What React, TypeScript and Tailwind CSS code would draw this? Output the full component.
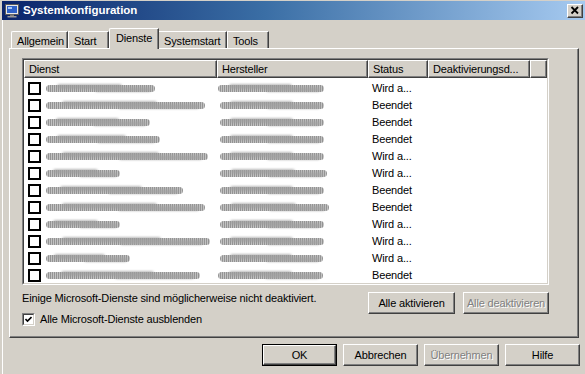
import React from "react";

type Row = { d: number; h: number; hx: number; s: string };

const rows: Row[] = [
  { d: 109, h: 106, hx: 1, s: "Wird a..." },
  { d: 159, h: 104, hx: 3, s: "Beendet" },
  { d: 104, h: 104, hx: 3, s: "Beendet" },
  { d: 114, h: 104, hx: 3, s: "Beendet" },
  { d: 162, h: 104, hx: 3, s: "Wird a..." },
  { d: 74, h: 107, hx: 3, s: "Wird a..." },
  { d: 137, h: 104, hx: 3, s: "Beendet" },
  { d: 159, h: 109, hx: 3, s: "Beendet" },
  { d: 74, h: 104, hx: 3, s: "Wird a..." },
  { d: 164, h: 104, hx: 3, s: "Wird a..." },
  { d: 84, h: 103, hx: 3, s: "Wird a..." },
  { d: 154, h: 105, hx: 1, s: "Beendet" },
];

function Smudge({ w, ml }: { w: number; ml: number }) {
  return (
    <div className="relative h-[11px]" style={{ width: w, marginLeft: ml }}>
      <div className="absolute inset-x-0 top-[2px] h-[7px] rounded-full bg-[repeating-linear-gradient(90deg,#888888_0px,#888888_1px,#bcbcbc_1px,#bcbcbc_2px)] opacity-90 blur-[0.7px]" />
      <div className="absolute left-[10%] right-[30%] top-[1px] h-[5px] rounded-full bg-[#9e9e9e] opacity-70 blur-[1.2px]" />
      <div className="absolute left-[45%] right-[4%] top-[4px] h-[5px] rounded-full bg-[#a2a2a2] opacity-70 blur-[1.2px]" />
    </div>
  );
}

function Bevel({
  w,
  children,
  disabled,
}: {
  w: number;
  children: React.ReactNode;
  disabled?: boolean;
}) {
  return (
    <div
      className="h-[22px] flex items-center justify-center bg-[#d4d0c8] border border-t-white border-l-white border-r-[#404040] border-b-[#404040] shadow-[inset_-1px_-1px_0_#808080]"
      style={{ width: w }}
    >
      <span
        className={
          disabled
            ? "text-[#808080] [text-shadow:1px_1px_0_#ffffff]"
            : "text-black"
        }
      >
        {children}
      </span>
    </div>
  );
}

function DefaultBtn({ children }: { children: React.ReactNode }) {
  return (
    <div className="w-[75px] h-[22px] border border-black">
      <div className="w-full h-full flex items-center justify-center border border-t-white border-l-white border-r-[#404040] border-b-[#404040] shadow-[inset_-1px_-1px_0_#808080]">
        <span>{children}</span>
      </div>
    </div>
  );
}

function HeaderCell({ w, children }: { w?: number; children?: React.ReactNode }) {
  return (
    <div
      className={
        "h-[18px] flex items-center pl-[4px] bg-[#d4d0c8] border border-t-white border-l-white border-r-[#404040] border-b-[#404040] shadow-[inset_-1px_-1px_0_#808080] whitespace-nowrap overflow-hidden" +
        (w ? "" : " flex-1")
      }
      style={w ? { width: w } : undefined}
    >
      {children}
    </div>
  );
}

export default function App() {
  return (
    <div className="w-[585px] h-[374px] overflow-hidden bg-[#d4d0c8] font-['Liberation_Sans',Arial,sans-serif] text-[11px] leading-[13px] tracking-[-0.15px] text-black select-none">
      <div className="pt-[1px] pl-[2px]">
        {/* Title bar */}
        <div className="h-[19px] flex items-center pl-[3px] pr-[2px] bg-[linear-gradient(90deg,#0a246a,#3a6ea5_45%,#a6caf0)]">
          <svg width="14" height="14" viewBox="0 0 14 14">
            <rect x="0.5" y="0.5" width="13" height="10" fill="#e8e8e8" stroke="#5a5a5a" />
            <rect x="2" y="2" width="10" height="7" fill="#2f62c8" />
            <rect x="3" y="3" width="4" height="2" fill="#a8c8f8" />
            <rect x="5" y="10.5" width="4" height="1.5" fill="#7a7a7a" />
            <rect x="2.5" y="12" width="9" height="1.5" fill="#9a9a9a" />
          </svg>
          <span className="ml-[4px] text-white font-bold text-[11.5px] tracking-[0px]">
            Systemkonfiguration
          </span>
          <div className="ml-auto w-[16px] h-[14px] flex items-center justify-center bg-[#d4d0c8] border border-t-white border-l-white border-r-[#404040] border-b-[#404040] shadow-[inset_-1px_-1px_0_#808080]">
            <svg width="10" height="9" viewBox="0 0 10 9">
              <path d="M1.5 1 L8 7.5 M8 1 L1.5 7.5" stroke="#000" strokeWidth="1.8" />
            </svg>
          </div>
        </div>

        {/* Body */}
        <div className="border-l border-white pl-[6px] pt-[8px] h-[360px]">
          {/* Tabs */}
          <div className="flex items-end h-[20px] pl-[2px]">
            <div className="w-[57px] h-[17px] pl-[5px] pt-[3px] rounded-tl-[2px] border-l border-t border-white border-r border-r-[#404040] shadow-[inset_-1px_0_0_#808080]">
              Allgemein
            </div>
            <div className="w-[41px] h-[17px] pl-[5px] pt-[3px] border-l border-t border-white border-r border-r-[#404040] shadow-[inset_-1px_0_0_#808080]">
              Start
            </div>
            <div className="relative z-10 w-[50px] h-[21px] mb-[-1px] pl-[6px] pt-[3px] bg-[#d4d0c8] rounded-tl-[2px] border-l border-t border-white border-r border-r-[#404040] shadow-[inset_-1px_0_0_#808080]">
              Dienste
            </div>
            <div className="w-[68px] h-[17px] pl-[5px] pt-[3px] border-t border-white border-r border-r-[#404040] shadow-[inset_-1px_0_0_#808080]">
              Systemstart
            </div>
            <div className="w-[42px] h-[17px] pl-[5px] pt-[3px] border-l border-t border-white border-r border-r-[#404040] shadow-[inset_-1px_0_0_#808080]">
              Tools
            </div>
          </div>

          {/* Panel */}
          <div className="w-[570px] h-[290px] border border-t-white border-l-white border-r-[#404040] border-b-[#404040] shadow-[inset_-1px_-1px_0_#808080] pt-[9px] pl-[12px]">
            {/* List */}
            <div className="w-[527px] h-[227px] border border-t-[#808080] border-l-[#808080] border-r-white border-b-white">
              <div className="w-full h-full border border-t-[#404040] border-l-[#404040] border-r-[#d4d0c8] border-b-[#d4d0c8] bg-white overflow-hidden">
                <div className="flex">
                  <HeaderCell w={193}>Dienst</HeaderCell>
                  <HeaderCell w={151}>Hersteller</HeaderCell>
                  <HeaderCell w={60}>Status</HeaderCell>
                  <HeaderCell w={102}>Deaktivierungsd...</HeaderCell>
                  <HeaderCell />
                </div>
                <div className="pt-[2px]">
                  {rows.map((r, i) => (
                    <div key={i} className="h-[17px] flex items-center">
                      <div className="w-[193px] flex items-center pl-[4px]">
                        <div className="w-[13px] h-[13px] border-2 border-black bg-white shrink-0" />
                        <Smudge w={r.d} ml={5} />
                      </div>
                      <div className="w-[151px] flex items-center">
                        <Smudge w={r.h} ml={r.hx} />
                      </div>
                      <div className="pl-[4px] whitespace-nowrap">{r.s}</div>
                    </div>
                  ))}
                </div>
              </div>
            </div>

            {/* Below list */}
            <div className="flex mt-[7px]">
              <div className="w-[346px]">
                <div className="h-[13px] whitespace-nowrap">
                  Einige Microsoft-Dienste sind möglicherweise nicht deaktiviert.
                </div>
                <div className="mt-[8px] h-[13px] flex items-center">
                  <div className="w-[13px] h-[13px] border border-t-[#808080] border-l-[#808080] border-r-white border-b-white">
                    <div className="w-full h-full bg-white border border-t-[#404040] border-l-[#404040] border-r-[#d4d0c8] border-b-[#d4d0c8] flex items-center justify-center">
                      <svg width="7" height="7" viewBox="0 0 7 7">
                        <path d="M0.5 3 L2.5 5 L6.5 1" stroke="#000" strokeWidth="1.6" fill="none" />
                      </svg>
                    </div>
                  </div>
                  <span className="ml-[5px] whitespace-nowrap">Alle Microsoft-Dienste ausblenden</span>
                </div>
              </div>
              <div className="flex gap-[8px]">
                <Bevel w={87}>Alle aktivieren</Bevel>
                <Bevel w={86} disabled>
                  Alle deaktivieren
                </Bevel>
              </div>
            </div>
          </div>

          {/* Dialog buttons */}
          <div className="flex gap-[6px] pl-[253px] mt-[6px]">
            <DefaultBtn>OK</DefaultBtn>
            <Bevel w={75}>Abbrechen</Bevel>
            <Bevel w={75} disabled>
              Übernehmen
            </Bevel>
            <Bevel w={75}>Hilfe</Bevel>
          </div>
        </div>
      </div>
    </div>
  );
}
